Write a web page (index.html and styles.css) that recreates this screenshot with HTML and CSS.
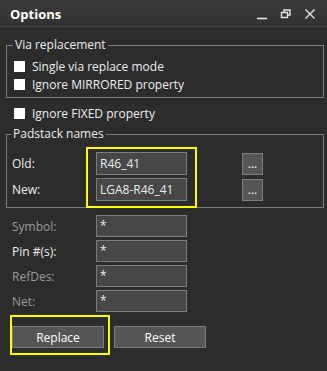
FILE: index.html
```html
<!DOCTYPE html>
<html lang="en">
<head>
  <meta charset="UTF-8">
  <title>Options</title>
  <link rel="stylesheet" href="styles.css">
</head>
<body>
  <div class="titlebar">
    <span class="title">Options</span>
    <div class="controls">
      <svg width="12" height="12" viewBox="0 0 12 12"><path d="M1 10.5h10" stroke="#e6e6e6" stroke-width="1.6"/></svg>
      <svg width="12" height="12" viewBox="0 0 12 12" fill="none" stroke="#e6e6e6" stroke-width="1.4"><rect x="1.5" y="4.5" width="6" height="5"/><path d="M4 4.5V2h6v5H7.5"/></svg>
      <svg width="12" height="12" viewBox="0 0 12 12"><path d="M1.5 1.5l9 9M10.5 1.5l-9 9" stroke="#e6e6e6" stroke-width="1.4"/></svg>
    </div>
  </div>

  <div class="content">
    <fieldset class="group">
      <legend>Via replacement</legend>
      <label class="check"><span class="box"></span>Single via replace mode</label>
      <label class="check"><span class="box"></span>Ignore MIRRORED property</label>
    </fieldset>

    <label class="check outer"><span class="box"></span>Ignore FIXED property</label>

    <fieldset class="group pads">
      <legend>Padstack names</legend>
      <div class="row">
        <span class="lbl">Old:</span>
        <div class="field">R46_41</div>
        <button class="browse">...</button>
      </div>
      <div class="row">
        <span class="lbl">New:</span>
        <div class="field">LGA8-R46_41</div>
        <button class="browse">...</button>
      </div>
    </fieldset>

    <div class="filters">
      <div class="row"><span class="lbl dim">Symbol:</span><div class="field small">*</div></div>
      <div class="row"><span class="lbl">Pin #(s):</span><div class="field small">*</div></div>
      <div class="row"><span class="lbl dim">RefDes:</span><div class="field small">*</div></div>
      <div class="row"><span class="lbl dim">Net:</span><div class="field small">*</div></div>
    </div>

    <div class="actions">
      <button class="btn">Replace</button>
      <button class="btn">Reset</button>
    </div>
  </div>

  <!-- yellow highlight marks -->
  <div class="mark mark-names"></div>
  <div class="mark mark-replace"></div>
</body>
</html>
```

FILE: styles.css
```css
body {
  margin: 0;
  width: 327px;
  height: 371px;
  background-color: #2c2c2c;
  font-family: 'Open Sans', 'Noto Sans', sans-serif;
  font-size: 12px;
  color: #ececec;
  position: relative;
  overflow: hidden;
}

.titlebar {
  height: 26px;
  border-bottom: 1px solid #444;
  background: linear-gradient(#3a3a3a, #323232);
  display: flex;
  align-items: center;
  justify-content: space-between;
  padding: 0 10px;
}

.title {
  font-weight: bold;
  font-size: 13px;
  color: #fff;
  padding-top: 1px;
}

.controls {
  display: flex;
  gap: 12px;
  padding-top: 2px;
  margin-right: 1px;
}

.content {
  padding: 0 3px 0 6px;
}

.group {
  margin: 10px 0 0;
  padding: 4px 5px 4px 7px;
  border: 1px solid #7d7d7d;
}

.group legend {
  padding: 0 2px;
  margin-left: -1px;
  line-height: 16px;
}

.check {
  display: flex;
  align-items: center;
  gap: 7px;
  height: 18px;
}

.box {
  width: 11px;
  height: 11px;
  background-color: #fff;
  margin-top: 1px;
}

.check.outer {
  margin-top: 6px;
  padding-left: 8px;
}

.pads {
  margin-top: 4px;
  padding: 10px 5px 6px 5px;
  display: flex;
  flex-direction: column;
  gap: 3px;
}

.row {
  display: flex;
  align-items: center;
}

.lbl {
  width: 84px;
}

.lbl.dim {
  color: #9a9a9a;
}

.field {
  width: 86px;
  height: 21px;
  border: 1px solid #7d7d7d;
  background-color: #474747;
  padding-left: 3px;
  line-height: 21px;
}

.field.small {
  height: 20px;
  line-height: 20px;
}

.browse {
  margin-left: 55px;
  width: 21px;
  height: 22px;
  padding: 0;
  border: 1px solid #7d7d7d;
  background-color: #555;
  color: #fff;
  font-family: inherit;
  font-size: 12px;
  line-height: 16px;
}

.filters {
  margin-top: 7px;
  padding-left: 6px;
  display: flex;
  flex-direction: column;
  gap: 3px;
}

.actions {
  margin-top: 14px;
  padding-left: 6px;
  display: flex;
  gap: 10px;
}

.btn {
  width: 92px;
  height: 22px;
  padding: 0;
  border: 1px solid #7d7d7d;
  background-color: #555;
  color: #fff;
  font-family: inherit;
  font-size: 12px;
}

.mark {
  position: absolute;
  border: 2px solid #ffff00;
  box-sizing: border-box;
}

.mark-names {
  left: 86px;
  top: 147px;
  width: 111px;
  height: 61px;
}

.mark-replace {
  left: 10px;
  top: 315px;
  width: 100px;
  height: 40px;
}
```
